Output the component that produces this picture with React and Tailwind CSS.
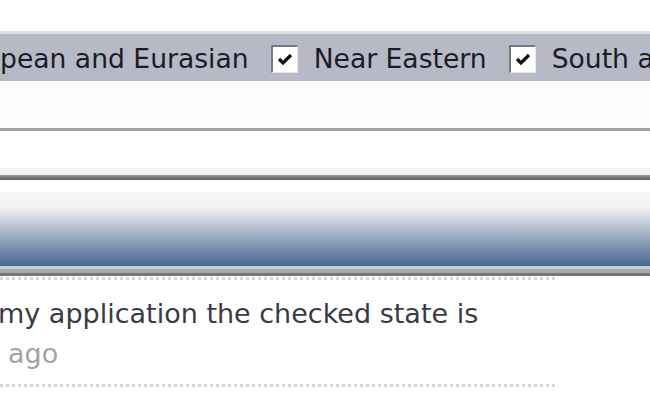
const regions = ['pean and Eurasian', 'Near Eastern', 'South and Southeast Asian']

function CheckBox() {
  return (
    <span className="w-[27px] h-[28px] shrink-0 bg-white border-t-2 border-l-2 border-[#7a7a7a] border-r border-b border-r-[#e8e8e8] border-b-[#e8e8e8] flex items-center justify-center">
      <svg width="16" height="14" viewBox="0 0 16 14">
        <path d="M2 6 L6 10 L14 2" fill="none" stroke="#111" strokeWidth="3.2" />
      </svg>
    </span>
  )
}

export default function App() {
  return (
    <div className="w-[650px] h-[400px] overflow-hidden bg-white font-['DejaVu_Sans',sans-serif]">
      <div className="h-[31px]" />
      {/* region filter bar */}
      <div className="h-[3px] bg-[#dcdde3]" />
      <div className="h-[47px] bg-[#b7b9c6] flex items-center whitespace-nowrap text-[26.6px] leading-[32px] text-[#1c1c28] pt-[3px]">
        {regions.map((r, i) => (
          <div key={r} className="flex items-center shrink-0">
            {i > 0 && <span className="ml-[22px] mr-[16px] flex"><CheckBox /></span>}
            <span>{r}</span>
          </div>
        ))}
      </div>
      <div className="h-[47px] bg-[#fcfcfc]" />
      <div className="h-[3px] bg-[#a2a2a2]" />
      <div className="h-[37px] bg-white" />
      <div className="h-[7px] bg-[#f1f1f3]" />
      <div className="h-[5px] bg-gradient-to-b from-[#9a9a9a] to-[#5e5e5e]" />
      <div className="h-[12px] bg-white" />
      {/* section header */}
      <div className="h-[74px] bg-gradient-to-b from-[#f5f5f5] via-[#f3f3f3] via-20% to-[#47688f]" />
      <div className="h-[3px] bg-[#c5d0dc]" />
      <div className="h-[4px] bg-[#a9a9a9]" />
      <div className="h-[3px] bg-[#777]" />
      <div className="w-[555px] border-b-[3px] border-dotted border-[#d6d6d6] h-[4px]" />
      {/* comment row */}
      <div className="w-[555px] pt-[18px] whitespace-nowrap">
        <p className="text-[27px] leading-[32px] text-[#3a3a44] ml-[-2px]">my application the checked state is</p>
        <p className="text-[27px] leading-[32px] text-[#a3a3a3] ml-[8px] mt-[8px]">ago</p>
      </div>
      <div className="w-[555px] mt-[14px] border-b-[3px] border-dotted border-[#d6d6d6]" />
    </div>
  )
}
